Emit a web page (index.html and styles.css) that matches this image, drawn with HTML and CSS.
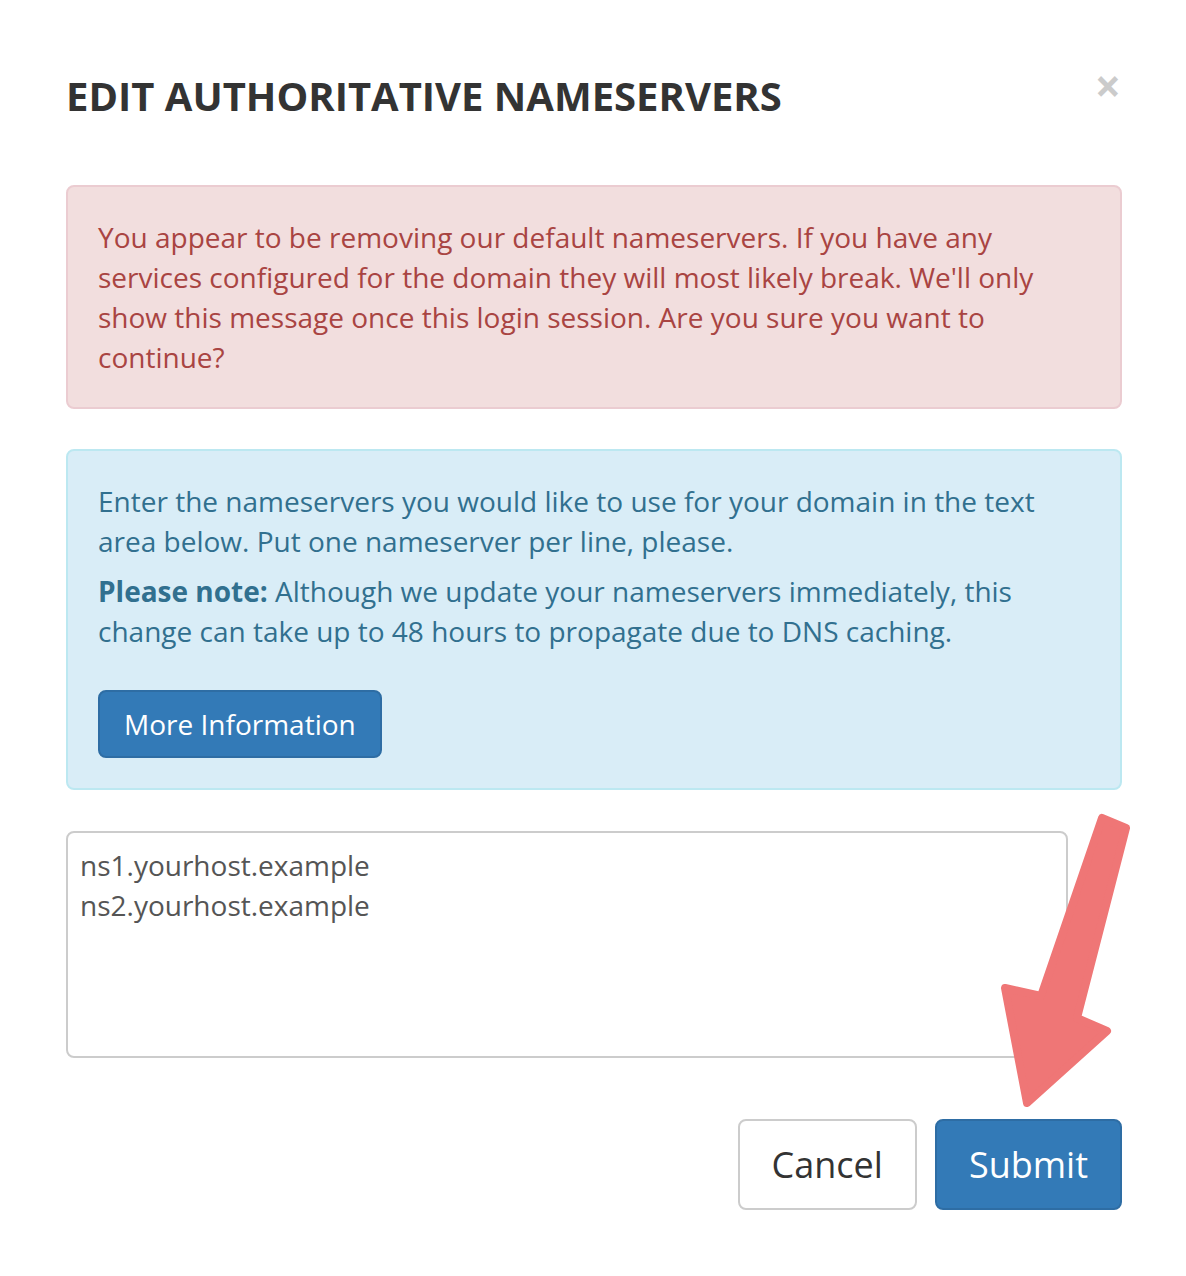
FILE: index.html
```html
<!DOCTYPE html>
<html lang="en">

<head>
    <meta charset="UTF-8">
    <meta name="viewport" content="width=device-width, initial-scale=1.0">
    <title>Edit Authoritative Nameservers</title>
    <link rel="stylesheet" href="styles.css">
</head>

<body>
    <div class="modal">
        <div class="modal-header">
            <h4 class="modal-title">Edit Authoritative Nameservers</h4>
            <button type="button" class="close" aria-label="Close">&times;</button>
        </div>

        <div class="modal-body">
            <div class="alert alert-danger">
                <p>You appear to be removing our default nameservers. If you have any services configured for the domain they will most likely break. We'll only show this message once this login session. Are you sure you want to continue?</p>
            </div>

            <div class="alert alert-info">
                <p>Enter the nameservers you would like to use for your domain in the text area below. Put one nameserver per line, please.</p>
                <p class="note"><strong>Please note:</strong> Although we update your nameservers immediately, this change can take up to 48 hours to propagate due to DNS caching.</p>
                <div class="alert-actions">
                    <a href="#" class="btn btn-primary">More Information</a>
                </div>
            </div>

            <textarea class="form-control" rows="5">ns1.yourhost.example
ns2.yourhost.example</textarea>
        </div>

        <div class="modal-footer">
            <button type="button" class="btn btn-lg btn-default">Cancel</button>
            <button type="button" class="btn btn-lg btn-primary">Submit</button>
        </div>
    </div>

    <!-- annotation arrow pointing at the submit button -->
    <svg class="arrow" width="1186" height="1276" viewBox="0 0 1186 1276">
        <path d="M1102 818 L1041 996 L1005 988 L1027 1103 L1107 1031 L1077 1018 L1126 828 Z"
              fill="#ef7676" stroke="#ef7676" stroke-width="8" stroke-linejoin="round" />
    </svg>
</body>

</html>
```

FILE: styles.css
```css
body {
    margin: 0;
    background: #fff;
    font-family: "Open Sans", "Liberation Sans", sans-serif;
    font-size: 28px;
    line-height: 40px;
    color: #333;
}

.modal {
    position: relative;
    width: 1056px;
    padding: 73px 0 0 66px;
}

.modal-header {
    display: flex;
    justify-content: space-between;
    align-items: flex-start;
}

.modal-title {
    margin: 0;
    font-size: 40px;
    line-height: 46px;
    font-weight: 700;
    text-transform: uppercase;
    color: #333;
}

.close {
    margin: -11px 1px 0 0;
    padding: 0;
    border: 0;
    background: none;
    font-family: "Open Sans", "Liberation Sans", sans-serif;
    font-size: 46px;
    line-height: 46px;
    font-weight: 700;
    color: #000;
    opacity: 0.2;
    cursor: pointer;
}

.modal-body {
    padding-top: 66px;
}

.alert {
    padding: 30px;
    border: 2px solid transparent;
    border-radius: 8px;
}

.alert p {
    margin: 0;
}

.alert-danger {
    background: #f2dede;
    border-color: #ebccd1;
    color: #a94442;
}

.alert-info {
    margin-top: 40px;
    background: #d9edf7;
    border-color: #bce8f1;
    color: #31708f;
}

.alert-info .note {
    margin-top: 10px;
}

.alert-actions {
    margin-top: 39px;
    display: flex;
}

.btn {
    display: inline-block;
    padding: 12px 24px;
    font-family: inherit;
    font-size: 28px;
    line-height: 40px;
    border: 2px solid transparent;
    border-radius: 8px;
    text-decoration: none;
    cursor: pointer;
}

.btn-lg {
    padding: 20px 32px;
    font-size: 36px;
    line-height: 47px;
}

.btn-primary {
    background: #337ab7;
    border-color: #2e6da4;
    color: #fff;
}

.btn-default {
    background: #fff;
    border-color: #ccc;
    color: #333;
}

.form-control {
    display: block;
    box-sizing: border-box;
    width: 1002px;
    height: 227px;
    margin-top: 41px;
    padding: 12px;
    border: 2px solid #ccc;
    border-radius: 8px;
    font-family: inherit;
    font-size: 28px;
    line-height: 40px;
    color: #555;
    resize: none;
}

.modal-footer {
    display: flex;
    justify-content: flex-end;
    gap: 18px;
    padding-top: 61px;
}

.arrow {
    position: absolute;
    top: 0;
    left: 0;
    pointer-events: none;
}
```
